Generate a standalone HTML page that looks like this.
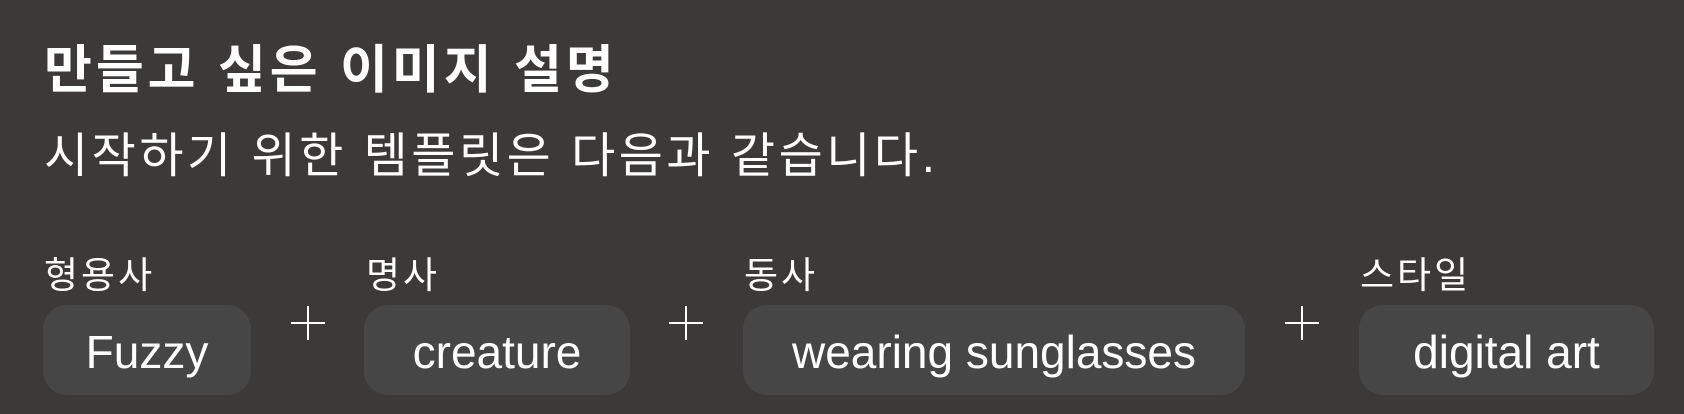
<!DOCTYPE html>
<html><head><meta charset="utf-8"><style>
body{margin:0;width:1684px;height:414px;background:#3b3a39;color:#fff;font-family:"Liberation Sans","Noto Sans CJK KR",sans-serif;position:relative;overflow:hidden}
.t{position:absolute;left:44px;top:45px;font-size:52px;line-height:1;font-weight:bold;white-space:nowrap;letter-spacing:4px}
.s{position:absolute;left:44px;top:133px;font-size:48px;line-height:1;white-space:nowrap;letter-spacing:3.5px}
.l{position:absolute;top:257px;font-size:37px;line-height:1;white-space:nowrap;letter-spacing:3px}
.c{position:absolute;top:305px;height:90px;box-sizing:border-box;padding-top:4px;background:#474646;border-radius:24px;display:flex;align-items:center;justify-content:center;font-size:46px}
.p{position:absolute;top:306px;width:34px;height:34px}
.p:before{content:"";position:absolute;left:0;right:0;top:16px;height:2px;background:#fff}
.p:after{content:"";position:absolute;top:0;bottom:0;left:16px;width:2px;background:#fff}
</style></head><body>
<div class="t">만들고 싶은 이미지 설명</div>
<div class="s">시작하기 위한 템플릿은 다음과 같습니다.</div>
<div class="l" style="left:44px">형용사</div>
<div class="l" style="left:366px">명사</div>
<div class="l" style="left:744px">동사</div>
<div class="l" style="left:1360px">스타일</div>
<div class="c" style="left:43px;width:208px">Fuzzy</div>
<div class="p" style="left:291px"></div>
<div class="c" style="left:364px;width:266px">creature</div>
<div class="p" style="left:669px"></div>
<div class="c" style="left:743px;width:502px">wearing sunglasses</div>
<div class="p" style="left:1285px"></div>
<div class="c" style="left:1359px;width:295px">digital art</div>
</body></html>
